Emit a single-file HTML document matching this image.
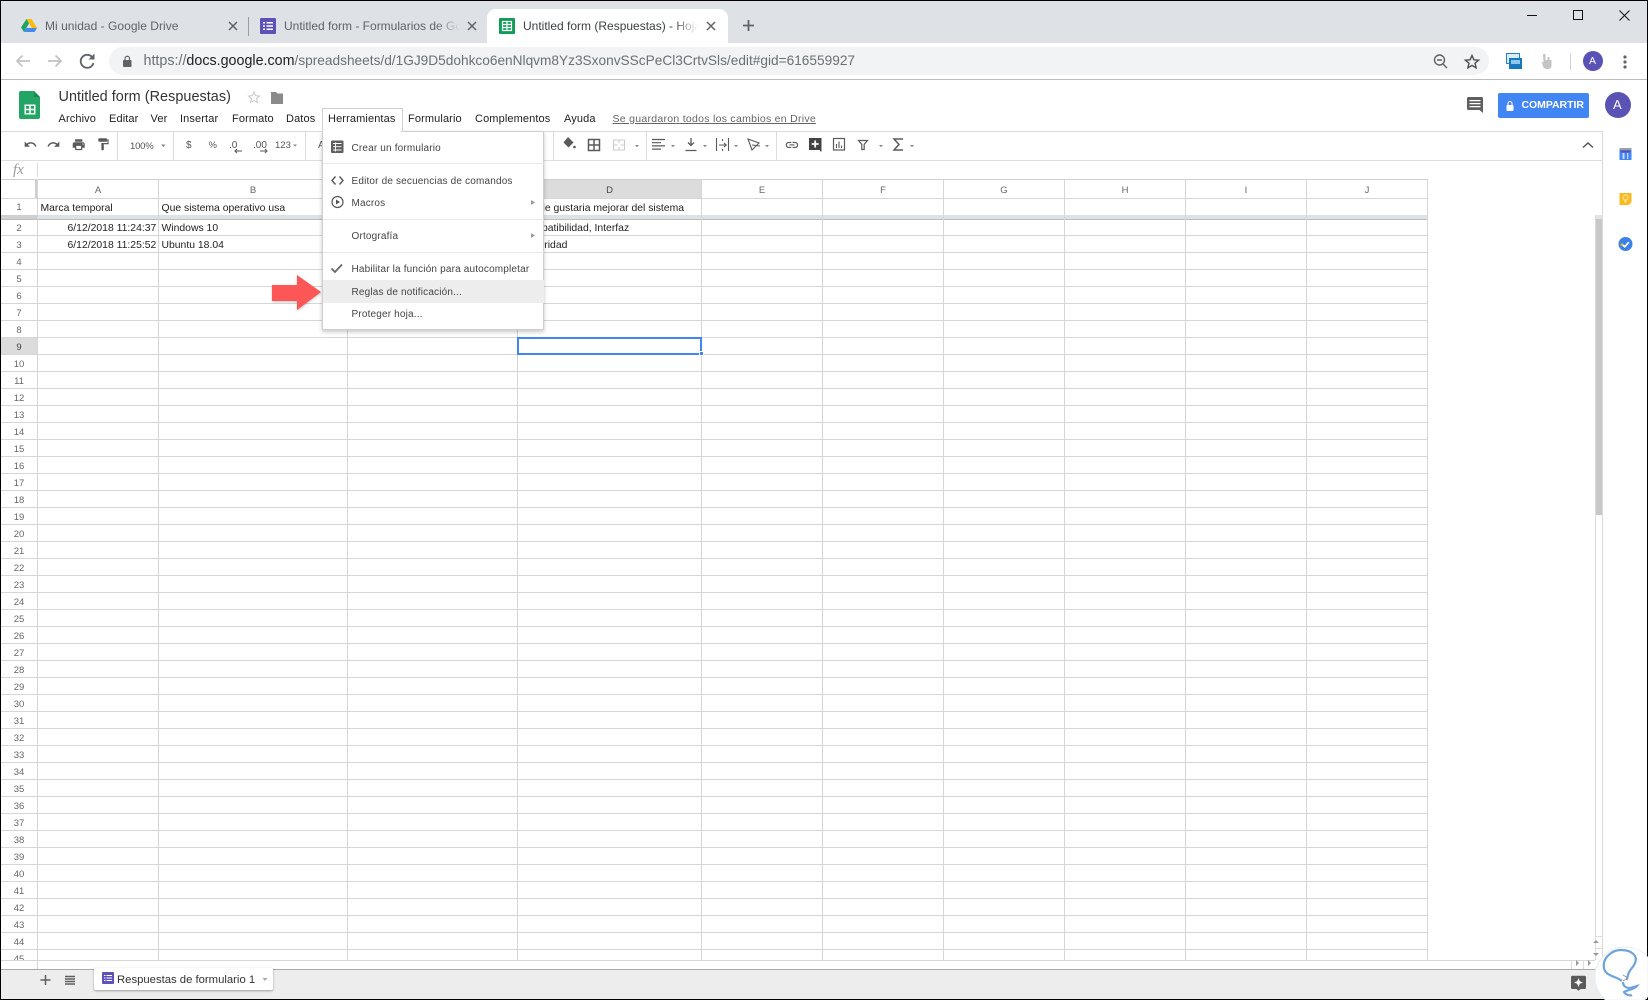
<!DOCTYPE html>
<html lang="es"><head><meta charset="utf-8"><title>Untitled form (Respuestas)</title>
<style>
html,body{margin:0;padding:0;background:#fff}
#p{position:relative;width:1648px;height:1000px;overflow:hidden;background:#fff;font-family:"Liberation Sans",sans-serif;filter:blur(.3px)}
#p div,#p span.t,#p span.c,#p a{position:absolute}
.t{white-space:nowrap;line-height:16px;height:16px}
.tab{font-size:12px;color:#5f6368;top:18px}
.m{font-size:11px;color:#222;top:111px;letter-spacing:.12px}
.c{font-size:10.4px;color:#222;line-height:17px;height:17px;white-space:nowrap}
.v{width:1px;background:#d6d6d6;top:179px;height:781px}
.h{height:1px;background:#d6d6d6;left:1px;width:1427px}
.ch{font-size:9.5px;color:#666;top:185px;line-height:11px;text-align:center}
#rn{left:1px;top:220px;width:36px;height:740px;overflow:hidden;text-align:center;font-size:9.5px;color:#666;line-height:17px}
#rn span{display:block;height:17px}
.mi{font-size:10px;color:#444;left:351.5px;letter-spacing:.17px}
.sep{background:#e8e8e8;height:1px;left:323px;width:221px}
.ts{width:1px;background:#dcdcdc;top:132px;height:28px}
.tb{font-size:10px;color:#555;top:138px}
.fade{-webkit-mask-image:linear-gradient(to right,#000 86%,transparent 100%);mask-image:linear-gradient(to right,#000 86%,transparent 100%)}
</style></head><body><div id="p">

<!-- Chrome -->
<div style="left:0;top:0;width:1648px;height:43px;background:#dee1e6"></div>
<div style="left:487px;top:9px;width:241px;height:34px;background:#fff;border-radius:9px 9px 0 0"></div>
<div style="left:248px;top:17px;width:1px;height:19px;background:#9a9da1"></div>
<span class="t tab" style="left:45px;letter-spacing:.03px">Mi unidad - Google Drive</span>
<div class="fade" style="left:284px;top:18px;width:176px;height:16px;overflow:hidden"><span class="t tab" style="left:0;top:0">Untitled form - Formularios de Google</span></div>
<div class="fade" style="left:523px;top:18px;width:175px;height:16px;overflow:hidden"><span class="t tab" style="left:0;top:0;color:#3c4043">Untitled form (Respuestas) - Hoja de cálculo</span></div>
<div style="left:109px;top:47px;width:1380px;height:28px;border-radius:14px;background:#f1f3f4"></div>
<span class="t" style="left:143.5px;top:53px;font-size:13.68px;color:#6b7075"><span style="font-size:14.3px">https://</span><span style="font-size:14.3px;color:#202124">docs.google.com</span>/spreadsheets/d/1GJ9D5dohkco6enNlqvm8Yz3SxonvSScPeCl3CrtvSls/edit#gid=616559927</span>
<div style="left:0;top:79px;width:1648px;height:1px;background:#bcbcbc"></div>

<svg style="position:absolute;left:0;top:0" width="1648" height="180" viewBox="0 0 1648 180">
 <!-- drive -->
 <polygon points="26.5,19 31.5,19 37,28 32,28" fill="#fbbc04"/>
 <polygon points="26.5,19 29,23.5 24,32 21,27.5" fill="#1ea362"/>
 <polygon points="25.5,32 24,32 26.6,28 37,28 34.5,32" fill="#4688f1"/>
 <g stroke="#5f6368" stroke-width="1.5" fill="none">
  <path d="M229 22l8 8M237 22l-8 8M468 22l8 8M476 22l-8 8M707 22l8 8M715 22l-8 8"/>
 </g>
 <!-- forms -->
 <rect x="260" y="18" width="16" height="16" rx="1" fill="#5c52b8"/>
 <path d="M263 22h2v1.5h-2zM266.500 22h6.500v1.500h-6.500zM263 25.200h2v1.500h-2zM266.500 25.200h6.500v1.500h-6.500zM263 28.500h2v1.500h-2zM266.500 28.500h6.500v1.500h-6.500z" fill="#fff"/>
 <!-- sheets tab -->
 <rect x="499" y="18" width="16" height="16" rx="1" fill="#0f9d58"/>
 <path d="M502.500 21.500h9v9h-9zM502.500 24.500h9M502.500 27.500h9M507 21.500v9" stroke="#fff" stroke-width="1.200" fill="none"/>
 <path d="M748.500 20v11M743 25.500h11" stroke="#5f6368" stroke-width="1.800"/>
 <!-- nav -->
 <path d="M30 61H17M22.500 55.500L17 61l5.500 5.500" stroke="#c0c3c6" stroke-width="1.700" fill="none"/>
 <path d="M48 61h13M55.500 55.500L61 61l-5.500 5.500" stroke="#c0c3c6" stroke-width="1.700" fill="none"/>
 <path d="M92.500 57.500A6.500 6.500 0 1 0 93.500 63" stroke="#5f6368" stroke-width="1.800" fill="none"/>
 <polygon points="88.500,59.500 94.500,59.500 94.500,53.500" fill="#5f6368"/>
 <rect x="123" y="60" width="8.500" height="7" rx="1" fill="#5f6368"/>
 <path d="M125 60v-1.500a2.200 2.200 0 0 1 4.500 0V60" stroke="#5f6368" stroke-width="1.200" fill="none"/>
 <circle cx="1439.500" cy="60" r="5" stroke="#5f6368" stroke-width="1.400" fill="none"/>
 <path d="M1437 60h5M1443 64l4 4" stroke="#5f6368" stroke-width="1.400"/>
 <path d="M1472 55.500l1.900 4.300 4.700.4-3.600 3 1.100 4.600-4.100-2.400-4.100 2.400 1.100-4.600-3.600-3 4.700-.4z" stroke="#4a4d50" stroke-width="1.400" fill="none"/>
 <rect x="1506.500" y="53.500" width="13" height="10" fill="#d8ecfa" stroke="#2a7fc4"/><rect x="1509" y="58" width="13" height="11" fill="#1a78bd"/><rect x="1511" y="60" width="9" height="4" fill="#8cc8ee"/>
 <path d="M1543 54h2.500v6h2v-3h2v3h2v6c0 2-2 3-4 3s-4.500-1-4.500-3l-1.500-4 2 .5z" fill="#c4c4c4"/>
 <rect x="1570" y="53" width="1" height="17" fill="#d0d2d4"/>
 <circle cx="1593" cy="61" r="10" fill="#5a53b5"/>
 <g fill="#5f6368"><circle cx="1625" cy="57" r="1.600"/><circle cx="1625" cy="62" r="1.600"/><circle cx="1625" cy="67" r="1.600"/></g>
 <path d="M1527 15.500h10" stroke="#111" stroke-width="1"/>
 <rect x="1573.500" y="10.500" width="9" height="9" stroke="#111" fill="none"/>
 <path d="M1619.500 10.500l10 10M1629.500 10.500l-10 10" stroke="#111" stroke-width="1"/>

 <!-- sheets logo -->
 <path d="M21 91h13l6 6v20a2 2 0 0 1-2 2H21a2 2 0 0 1-2-2V93a2 2 0 0 1 2-2z" fill="#23a566"/>
 <path d="M34 91l6 6h-6z" fill="#178a52"/>
 <path d="M24.500 104.500h11v10h-11z" fill="#fff"/>
 <path d="M26 106h3.200v2.800H26zM30.800 106H34v2.800h-3.200zM26 110.300h3.200v2.800H26zM30.800 110.300H34v2.800h-3.200z" fill="#23a566"/>
 <path d="M254 92l1.600 3.600 3.900.4-3 2.600.9 3.900-3.400-2-3.400 2 .9-3.900-3-2.600 3.900-.4z" stroke="#c9c9c9" stroke-width="1" fill="none"/>
 <path d="M271 92h5l1.500 1.500h5.500v10.500h-12z" fill="#8a8a8a"/>
 <path d="M1468.500 97h13a1.500 1.500 0 0 1 1.500 1.500V113l-3.500-3h-11a1.500 1.500 0 0 1-1.500-1.500v-10a1.500 1.500 0 0 1 1.500-1.500z" fill="#5f5f5f"/>
 <path d="M1469.500 100h11v1.300h-11zM1469.500 103h11v1.300h-11zM1469.500 106h11v1.300h-11z" fill="#fff"/>
 <circle cx="1618" cy="105" r="13" fill="#5a53b5"/>

 <!-- toolbar icons -->
 <g fill="#5a5a5a">
  <path transform="translate(23.500,137.500) scale(.58)" d="M12.500 8c-2.650 0-5.050.990-6.900 2.600L2 7v9h9l-3.620-3.620c1.390-1.160 3.160-1.880 5.120-1.880 3.540 0 6.550 2.310 7.600 5.500l2.370-.78C21.080 11.030 17.150 8 12.500 8z"/>
  <path transform="translate(60.500,137.500) scale(-.58,.58)" d="M12.500 8c-2.650 0-5.050.990-6.900 2.600L2 7v9h9l-3.620-3.620c1.390-1.160 3.160-1.880 5.120-1.880 3.540 0 6.550 2.310 7.600 5.500l2.370-.78C21.080 11.030 17.150 8 12.500 8z"/>
  <path transform="translate(71.500,137.500) scale(.6)" d="M19 8H5c-1.660 0-3 1.340-3 3v6h4v4h12v-4h4v-6c0-1.660-1.340-3-3-3zm-3 11H8v-5h8v5zm3-7c-.55 0-1-.45-1-1s.45-1 1-1 1 .45 1 1-.45 1-1 1zm-1-9H6v4h12V3z"/>
  <path transform="translate(96,137) scale(.6)" d="M18 4V3c0-.55-.45-1-1-1H5c-.55 0-1 .45-1 1v4c0 .55.45 1 1 1h12c.55 0 1-.45 1-1V6h1v4H9v11c0 .55.45 1 1 1h2c.55 0 1-.45 1-1v-9h8V4h-3z"/>
 </g>
 <g fill="#888">
  <path d="M161 144.500h4.500l-2.250 2.500zM293 144.500h4l-2 2.300z"/>
  <path d="M635 145h4l-2 2.300zM671 145h4l-2 2.300zM703 145h4l-2 2.300zM734 145h4l-2 2.300zM765 145h4l-2 2.300zM879 145h4l-2 2.300zM910 145h4l-2 2.300z"/>
 </g>
 <path d="M235 151h7M237 149l-2 2 2 2" stroke="#555" stroke-width="1" fill="none"/>
 <path d="M260 151h7M265 149l2 2-2 2" stroke="#555" stroke-width="1" fill="none"/>
 <path d="M568 137l5.500 5.500-5 5-5-5z" fill="#5a5a5a"/><circle cx="574.500" cy="147" r="1.300" fill="#5a5a5a"/>
 <path d="M588.500 139.500h11v11h-11zM594 139.500v11M588.500 145h11" stroke="#5a5a5a" stroke-width="1.500" fill="none"/>
 <path d="M613.500 140h11v10h-11zM619 140v3M619 147v3M613.500 145h4M620.500 145h4" stroke="#ccc" stroke-width="1.100" fill="none"/>
 <path d="M652 139.500h13M652 142.700h9M652 145.900h13M652 149.100h9" stroke="#5a5a5a" stroke-width="1.200"/>
 <path d="M691 138v7M688 142.500l3 3 3-3M685.500 150.500h11" stroke="#5a5a5a" stroke-width="1.300" fill="none"/>
 <path d="M716.500 138v13M728.500 138v13M719 145h7M724 143l2.200 2-2.200 2M722.500 139v2M722.500 149v2" stroke="#5a5a5a" stroke-width="1.100" fill="none"/>
 <path d="M748 139l11 4-7 7zM752 145l8 1" stroke="#5a5a5a" stroke-width="1.100" fill="none"/>
 <path transform="translate(784.500,137.500) scale(.62)" fill="#5a5a5a" d="M3.900 12c0-1.710 1.390-3.100 3.100-3.100h4V7H7c-2.760 0-5 2.240-5 5s2.240 5 5 5h4v-1.900H7c-1.710 0-3.100-1.390-3.100-3.100zM8 13h8v-2H8v2zm9-6h-4v1.900h4c1.710 0 3.100 1.390 3.100 3.100s-1.390 3.100-3.100 3.100h-4V17h4c2.760 0 5-2.240 5-5s-2.240-5-5-5z"/>
 <path d="M809 138h12.500v13.500h-1l-1-1.500H809z" fill="#444"/>
 <path d="M815.200 140.500v7M811.700 144h7" stroke="#fff" stroke-width="1.800"/>
 <rect x="833.500" y="138.500" width="11" height="11.500" stroke="#5a5a5a" stroke-width="1.200" fill="none"/>
 <path d="M836.500 144v4M839 141.500v6.500M841.500 145.500v2.500" stroke="#5a5a5a" stroke-width="1.100"/>
 <path d="M858.500 140.500h9l-3.300 3.800v5.200h-2.400v-5.200z" stroke="#5a5a5a" stroke-width="1.200" fill="none"/>
 <path d="M903 139h-9l5 5.500-5 5.500h9" stroke="#5a5a5a" stroke-width="1.500" fill="none"/>
 <path d="M1583 147.500l5-4.500 5 4.500" stroke="#555" stroke-width="1.500" fill="none"/>
</svg>

<!-- Sheets header -->
<span class="t" style="left:58.500px;top:89px;font-size:14.4px;color:#333;letter-spacing:.05px">Untitled form (Respuestas)</span>
<span class="t m" style="left:58.500px">Archivo</span>
<span class="t m" style="left:109px">Editar</span>
<span class="t m" style="left:150.500px">Ver</span>
<span class="t m" style="left:180px">Insertar</span>
<span class="t m" style="left:232px">Formato</span>
<span class="t m" style="left:286px">Datos</span>
<div style="left:322px;top:108px;width:79px;height:21px;border:1px solid #cfcfcf;border-bottom:1px solid #fff;background:#fff;z-index:6"></div>
<span class="t m" style="left:328px;z-index:7">Herramientas</span>
<span class="t m" style="left:408px">Formulario</span>
<span class="t m" style="left:475px">Complementos</span>
<span class="t m" style="left:564px">Ayuda</span>
<span class="t m" style="left:612.500px;color:#666;text-decoration:underline;letter-spacing:.28px;font-size:10.500px">Se guardaron todos los cambios en Drive</span>
<div style="left:1498px;top:93px;width:91px;height:25px;background:#4285f4;border-radius:2px"></div>
<svg style="position:absolute;left:1503px;top:99px" width="14" height="14"><rect x="3.500" y="6" width="7" height="6" rx="1" fill="#fff"/><path d="M5 6V4.500a2 2 0 0 1 4 0V6" stroke="#fff" stroke-width="1.100" fill="none"/></svg>
<span class="t" style="left:1521.500px;top:97px;font-size:10.500px;font-weight:bold;color:#fff;letter-spacing:-.05px">COMPARTIR</span>
<span class="t" style="left:1613px;top:97px;font-size:13px;color:#fff">A</span>
<span class="t" style="left:1589px;top:53px;font-size:10.500px;color:#fff">A</span>

<!-- toolbar text -->
<div style="left:0;top:131px;width:1602px;height:1px;background:#dadada"></div>
<div style="left:0;top:160px;width:1602px;height:1px;background:#dedede"></div>
<div class="ts" style="left:117px"></div><div class="ts" style="left:173px"></div><div class="ts" style="left:305px"></div><div class="ts" style="left:553px"></div><div class="ts" style="left:646px"></div><div class="ts" style="left:776px"></div>
<span class="t tb" style="left:130px;top:139px;font-size:9.500px;letter-spacing:-.2px">100%</span>
<span class="t tb" style="left:186px">$</span>
<span class="t tb" style="left:208.500px;font-size:9.500px">%</span>
<span class="t tb" style="left:229px">.0</span>
<span class="t tb" style="left:253px">.00</span>
<span class="t tb" style="left:275px;font-size:9.500px">123</span>
<span class="t tb" style="left:318px">A</span>
<span class="t" style="left:13px;top:162px;font-family:'Liberation Serif',serif;font-style:italic;font-size:15px;color:#999">fx</span>
<div style="left:37px;top:163px;width:1px;height:14px;background:#dadada"></div>

<!-- grid -->
<div style="left:517px;top:179px;width:185px;height:19px;background:#dcdcdc"></div>
<div style="left:1px;top:337px;width:36px;height:17px;background:#dcdcdc"></div>
<div style="left:1px;top:179px;width:1427px;height:1px;background:#d0d0d0"></div>
<div class="h" style="top:198px"></div>
<div style="left:1px;top:215px;width:1427px;height:4px;background:#dfe1e8"></div>
<div style="left:1px;top:215px;width:36px;height:4px;background:#cfcfcf"></div>
<div style="left:1px;top:219px;width:1427px;height:1px;background:#bdbdbd"></div>
<div style="left:1px;top:219px;width:1427px;height:741px;background:repeating-linear-gradient(to bottom,transparent 0,transparent 16px,#d6d6d6 16px,#d6d6d6 17px)"></div>
<div class="v" style="left:37px;height:790px"></div><div class="v" style="left:158px"></div><div class="v" style="left:347px"></div><div class="v" style="left:517px"></div><div class="v" style="left:701px"></div><div class="v" style="left:822px"></div><div class="v" style="left:943px"></div><div class="v" style="left:1064px"></div><div class="v" style="left:1185px"></div><div class="v" style="left:1306px"></div><div class="v" style="left:1427px"></div>
<div style="left:35px;top:179px;width:2px;height:19px;background:#cfcfcf"></div>
<div style="left:1px;top:960px;width:1594px;height:1px;background:#d6d6d6"></div>

<div class="ch" style="left:38px;width:120px">A</div>
<div class="ch" style="left:159px;width:188px">B</div>
<div class="ch" style="left:348px;width:169px">C</div>
<div class="ch" style="left:518px;width:183px;color:#444">D</div>
<div class="ch" style="left:702px;width:120px">E</div>
<div class="ch" style="left:823px;width:120px">F</div>
<div class="ch" style="left:944px;width:120px">G</div>
<div class="ch" style="left:1065px;width:120px">H</div>
<div class="ch" style="left:1186px;width:120px">I</div>
<div class="ch" style="left:1307px;width:120px">J</div>
<div style="left:1px;top:199px;width:36px;height:17px;text-align:center;font-size:9.500px;color:#666;line-height:17px">1</div>
<div id="rn"><span>2</span><span>3</span><span>4</span><span>5</span><span>6</span><span>7</span><span>8</span><span style="color:#444">9</span><span>10</span><span>11</span><span>12</span><span>13</span><span>14</span><span>15</span><span>16</span><span>17</span><span>18</span><span>19</span><span>20</span><span>21</span><span>22</span><span>23</span><span>24</span><span>25</span><span>26</span><span>27</span><span>28</span><span>29</span><span>30</span><span>31</span><span>32</span><span>33</span><span>34</span><span>35</span><span>36</span><span>37</span><span>38</span><span>39</span><span>40</span><span>41</span><span>42</span><span>43</span><span>44</span><span>45</span></div>

<span class="c" style="left:40.500px;top:199.500px">Marca temporal</span>
<span class="c" style="left:161.500px;top:199.500px">Que sistema operativo usa</span>
<span class="c" style="left:520px;top:199.500px">Que le gustaria mejorar del sistema</span>
<span class="c" style="left:67.500px;top:220px">6/12/2018 11:24:37</span>
<span class="c" style="left:67.500px;top:237px">6/12/2018 11:25:52</span>
<span class="c" style="left:161.500px;top:220px">Windows 10</span>
<span class="c" style="left:161.500px;top:237px">Ubuntu 18.04</span>
<span class="c" style="left:520px;top:220px">Compatibilidad, Interfaz</span>
<span class="c" style="left:520px;top:237px">Seguridad</span>

<div style="left:517px;top:337px;width:181px;height:14px;border:2px solid #4285f4"></div>
<div style="left:699px;top:351px;width:5px;height:5px;background:#4285f4;border:1px solid #fff;box-sizing:border-box"></div>

<!-- scrollbars -->
<div style="left:1595px;top:215px;width:1px;height:745px;background:#dcdcdc"></div>
<div style="left:1596px;top:215px;width:6px;height:4px;background:#e4e4e4"></div>
<div style="left:1596px;top:219px;width:6px;height:296px;background:#c8c8c8"></div>
<div style="left:1595px;top:936px;width:7px;height:1px;background:#dcdcdc"></div>
<div style="left:1595px;top:948px;width:7px;height:1px;background:#dcdcdc"></div>
<div style="left:1571px;top:960px;width:1px;height:9px;background:#dcdcdc"></div>
<div style="left:1583px;top:960px;width:1px;height:9px;background:#dcdcdc"></div>
<svg style="position:absolute;left:1570px;top:936px" width="32" height="34"><path d="M26 4l3 3h-6zM23 17h6l-3 3zM9 27l-3-3v6zM18 24l3 3-3 3z" fill="#999"/></svg>
<!-- side panel -->
<div style="left:1602px;top:131px;width:1px;height:838px;background:#dadada"></div>
<svg style="position:absolute;left:1612px;top:140px" width="30" height="120">
 <rect x="7.500" y="8" width="12" height="2.500" fill="#9aa0a6"/><rect x="7.500" y="10" width="12" height="10" fill="#4285f4"/><rect x="8.500" y="10.500" width="10" height="2" fill="#5a53b5"/>
 <path d="M10.500 13h2v6h-2zM15 13h1.300v6H15z" fill="#c8d8f8"/>
 <path d="M7.500 53h12v9.500L16.500 65h-9z" fill="#f9b921"/>
 <circle cx="13.500" cy="57.500" r="2.500" stroke="#fde9a8" stroke-width="1" fill="none"/><path d="M12.500 60.500h2v2h-2z" fill="#fde9a8"/>
 <circle cx="13.500" cy="104" r="7" fill="#3b82e8"/><path d="M10.800 105l2 1.700 4-4.500" stroke="#fff" stroke-width="1.800" fill="none"/><circle cx="9.800" cy="104.500" r="1.300" fill="#fbbc04"/>
</svg>

<!-- bottom bar -->
<div style="left:0;top:969px;width:1648px;height:31px;background:#ededed"></div>
<div style="left:0;top:969px;width:1648px;height:1px;background:#aaa"></div>
<div style="left:94px;top:968px;width:179px;height:22px;background:#fff;box-shadow:0 1px 2px rgba(0,0,0,.35);border-radius:0 0 2px 2px"></div>
<svg style="position:absolute;left:0;top:965px" width="300" height="35">
 <path d="M45.500 10v10M40.500 15h10" stroke="#5f5f5f" stroke-width="1.500"/>
 <path d="M65 11.500h10M65 14h10M65 16.500h10M65 19h10" stroke="#5f5f5f" stroke-width="1.400"/>
 <rect x="102" y="7" width="12" height="12" rx="1" fill="#5c52b8"/>
 <path d="M104 10h1.500v1H104zM106.500 10h5.500v1h-5.500zM104 12.500h1.500v1H104zM106.500 12.500h5.500v1h-5.500zM104 15h1.500v1H104zM106.500 15h5.500v1h-5.500z" fill="#fff"/>
 <path d="M262.500 13h5l-2.500 3z" fill="#aaa"/>
</svg>
<span class="t" style="left:117px;top:972px;font-size:11.300px;color:#333">Respuestas de formulario 1</span>
<svg style="position:absolute;left:1565px;top:970px" width="26" height="26">
 <path d="M7.500 5.700h12a1.500 1.500 0 0 1 1.500 1.500v10.300a1.500 1.500 0 0 1-1.500 1.500h-4l-2 1.800-2-1.800h-4A1.500 1.500 0 0 1 6 17.500V7.200a1.500 1.500 0 0 1 1.500-1.500z" fill="#5a5a5a"/>
 <path d="M13.500 8l1.300 3.200 3.200 1.300-3.200 1.300-1.300 3.200-1.300-3.200-3.200-1.300 3.200-1.300z" fill="#fff"/>
</svg>

<!-- borders -->
<div style="left:0;top:0;width:1648px;height:1px;background:#000"></div>
<div style="left:0;top:0;width:1px;height:1000px;background:#000"></div>
<div style="left:1647px;top:0;width:1px;height:1000px;background:#000"></div>
<div style="left:0;top:999px;width:1648px;height:1px;background:#000"></div>

<!-- watermark -->
<svg style="position:absolute;left:1590px;top:940px" width="58" height="60">
 <circle cx="35" cy="37" r="30" fill="#fff" fill-opacity=".97" stroke="#e6edf5" stroke-width="1"/>
 <path d="M32 41C26 36 15 36 14 28C12 18 22 10 31 10C42 10 48 16 45 23C43 28 39 30 38 35L36.500 40" stroke="#6fa3dc" stroke-width="2.200" fill="none"/>
 <path d="M33 42C33 46 36 48 40 48L47 46C44 50 36 50 34 52C36 55 40 56 42 55" stroke="#6fa3dc" stroke-width="2.200" fill="none"/>
 <path d="M33 35l5 3-5 3" stroke="#999" stroke-width="1" fill="none"/>
</svg>

<!-- Arrow -->
<svg style="position:absolute;left:268px;top:272px;z-index:9" width="60" height="42">
 <polygon points="4,13 29,13 29,3 53,20 29,38 29,29 4,29" fill="#fd5656" style="filter:drop-shadow(0 1px 1px rgba(0,0,0,.25))"/>
</svg>

<!-- Menu -->
<div style="left:322px;top:131px;width:222px;height:199px;background:#fff;border:1px solid #cfcfcf;box-sizing:border-box;box-shadow:0 2px 4px rgba(0,0,0,.22);z-index:6"></div>
<div style="left:323px;top:130px;width:78px;height:2px;background:#fff;z-index:6"></div>
<div style="left:323px;top:280px;width:221px;height:23px;background:#ededed;z-index:7"></div>
<div class="sep" style="top:163px;z-index:7"></div><div class="sep" style="top:219px;z-index:7"></div><div class="sep" style="top:252px;z-index:7"></div>
<span class="t mi" style="top:141px;z-index:8">Crear un formulario</span>
<span class="t mi" style="top:174px;z-index:8">Editor de secuencias de comandos</span>
<span class="t mi" style="top:195.500px;z-index:8">Macros</span>
<span class="t mi" style="top:229px;z-index:8">Ortografía</span>
<span class="t mi" style="top:262px;z-index:8">Habilitar la función para autocompletar</span>
<span class="t mi" style="top:284.500px;z-index:8">Reglas de notificación...</span>
<span class="t mi" style="top:307px;z-index:8">Proteger hoja...</span>
<svg style="position:absolute;left:322px;top:131px;z-index:8" width="222" height="200">
 <rect x="9" y="9.500" width="12.500" height="12.500" rx="1" fill="#5f5f5f"/>
 <path d="M11 12.500h8.500M11 15.700h8.500M11 19h8.500M13.500 11.500v9" stroke="#fff" stroke-width=".9"/>
 <path d="M13.500 45.500L10 49.500l3.500 4M17.500 45.500l3.500 4-3.500 4" stroke="#555" stroke-width="1.400" fill="none"/>
 <circle cx="15.500" cy="71" r="5.500" stroke="#555" stroke-width="1.200" fill="none"/>
 <path d="M14 68.500l4 2.500-4 2.500z" fill="#555"/>
 <path d="M9.500 137.500l3.500 3.500 7-7.500" stroke="#666" stroke-width="1.700" fill="none"/>
 <path d="M209 69l4 2.500-4 2.500zM209 102l4 2.500-4 2.500z" fill="#999"/>
</svg>

</div></body></html>
